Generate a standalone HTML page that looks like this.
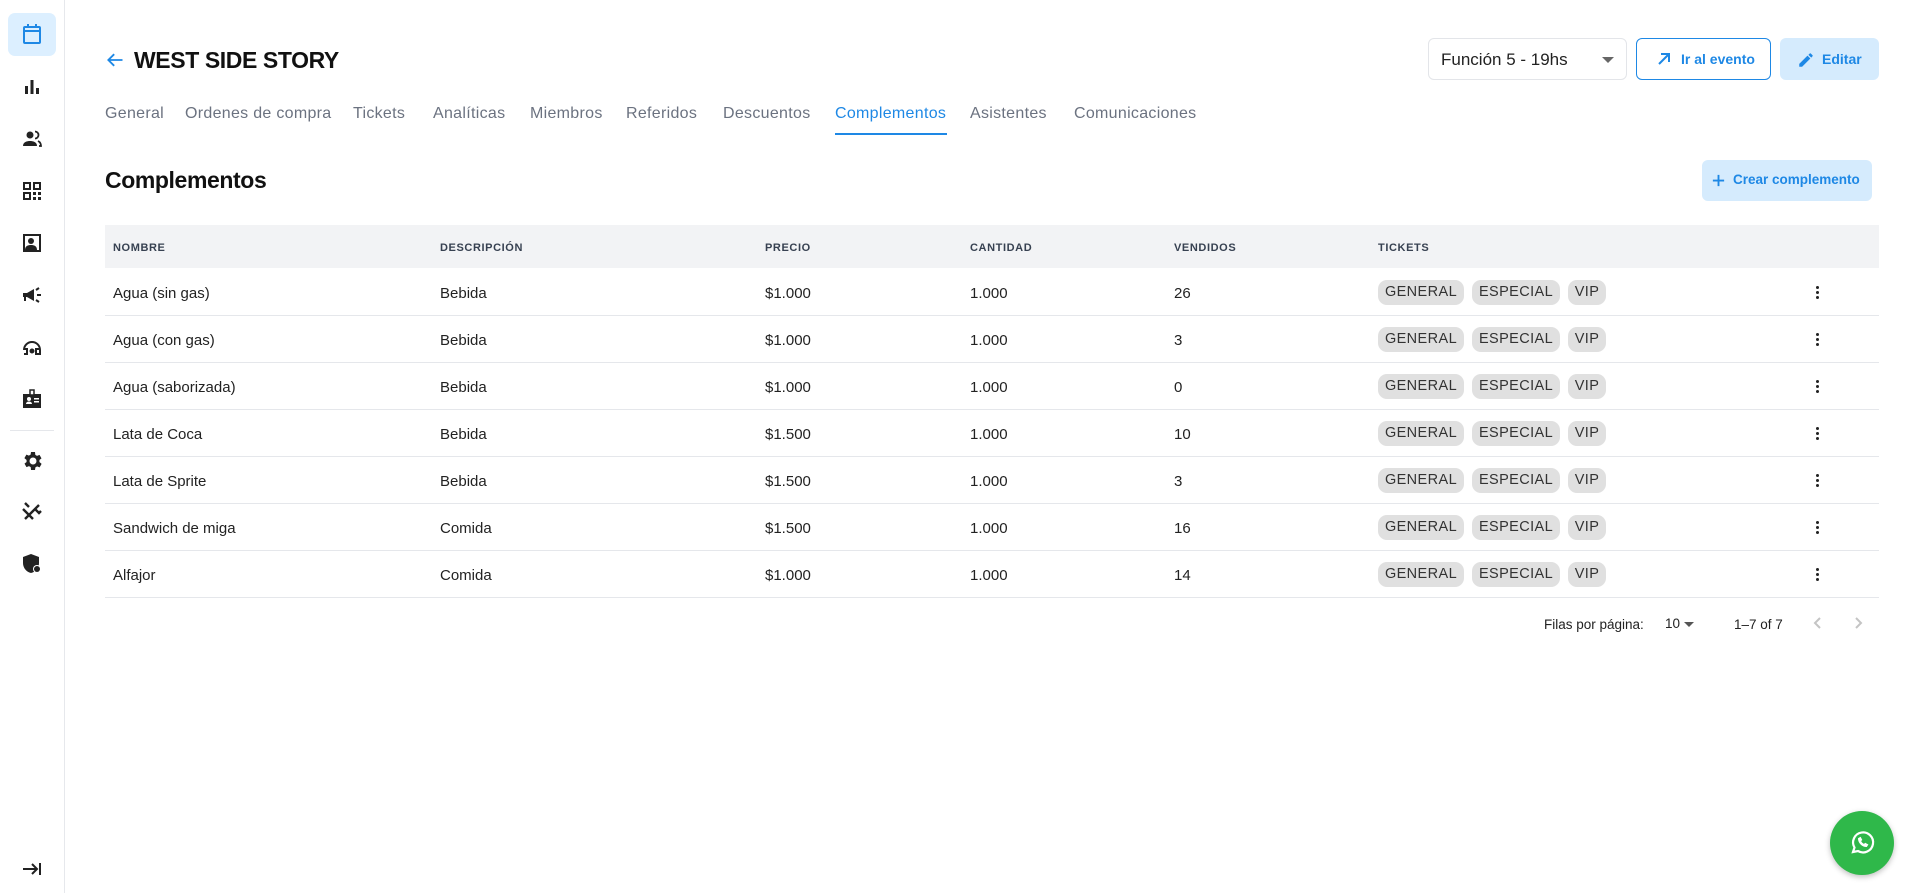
<!DOCTYPE html>
<html><head><meta charset="utf-8"><style>
*{box-sizing:border-box;margin:0;padding:0}
body{width:1911px;height:893px;background:#fff;font-family:"Liberation Sans",sans-serif;color:#222;position:relative;overflow:hidden}
.sb{position:absolute;left:0;top:0;width:65px;height:893px;border-right:1px solid #e6e8ec}
.ic{position:absolute;left:20px;width:24px;height:24px}
.abs{position:absolute}
.tab{position:absolute;top:105px;font-size:16px;color:#6b7280;letter-spacing:.3px}
.th{position:absolute;top:242px;font-size:11px;font-weight:bold;color:#374151;letter-spacing:.6px}
.row{position:absolute;left:105px;width:1774px;height:47px;border-bottom:1px solid #e5e7eb}
.row span{position:absolute;top:16px;font-size:15px;color:#222}
.chip{position:absolute;top:11px;height:25px;line-height:25px;background:#e0e0e0;border-radius:9px;font-size:14.5px;color:#333;text-align:center;letter-spacing:.4px}
.kb{position:absolute;left:1711px;top:17px;width:3px}
.kb i{display:block;width:3px;height:3px;border-radius:2px;background:#222;margin-bottom:2px}
</style></head><body>
<div class="sb">
 <div class="abs" style="left:8px;top:13px;width:48px;height:43px;background:#dcefff;border-radius:7px"></div>
 <svg class="ic" style="top:22px" viewBox="0 0 24 24" fill="none" stroke="#1e88e5" stroke-width="2"><rect x="4" y="5" width="16" height="16" rx="1"/><path d="M4 9h16M8 2v4M16 2v4"/></svg>
 <svg class="ic" style="top:75px" viewBox="0 0 24 24" fill="#222"><rect x="5" y="11" width="3" height="8"/><rect x="10.5" y="5" width="3" height="14"/><rect x="16" y="13" width="3" height="6"/></svg>
 <svg class="ic" style="top:127px" viewBox="0 0 24 24" fill="#222"><circle cx="10" cy="8" r="3.5"/><path d="M3 19c0-4 4-5 7-5s7 1 7 5z"/><path d="M15 4.5a3.5 3.5 0 010 7M18 14c2 1 3 2.5 3 5h-2" stroke="#222" stroke-width="1.8" fill="none"/></svg>
 <svg class="ic" style="top:179px" viewBox="0 0 24 24" fill="#222"><path d="M3 3h8v8H3zM13 3h8v8h-8zM3 13h8v8H3zM5 5v4h4V5zM15 5v4h4V5zM5 15v4h4v-4zM13 13h3v3h-3zM18 13h3v3h-3zM13 18h3v3h-3zM18 18h3v3h-3z" fill-rule="evenodd"/></svg>
 <svg class="ic" style="top:231px" viewBox="0 0 24 24" fill="#222"><path d="M3 3h18v18H3zM5 5v14h14V5z" fill-rule="evenodd"/><circle cx="11" cy="10" r="3"/><path d="M5 19c0-4 3-5 6-5s6 1 6 5z"/></svg>
 <svg class="ic" style="top:283px" viewBox="0 0 24 24" fill="#222"><path d="M3 10h4l7-4v12l-7-4H6v4H4v-4H3z"/><path d="M17 12h4M16 7l3-2M16 17l3 2" stroke="#222" stroke-width="2"/></svg>
 <svg class="ic" style="top:335px" viewBox="0 0 24 24" fill="none" stroke="#222" stroke-width="2"><path d="M4 15a8 8 0 0116 0v4h-4v-5h3M4 14h3v5H4"/><circle cx="12" cy="16" r="1.5" fill="#222"/></svg>
 <svg class="ic" style="top:387px" viewBox="0 0 24 24" fill="#222"><path d="M3 7h18v14H3z"/><path d="M10 3h4v5h-4z" fill="#fff" stroke="#222" stroke-width="1.5"/><circle cx="9" cy="12" r="2" fill="#fff"/><path d="M6 17c0-2 2-2.5 3-2.5s3 .5 3 2.5zM14 11h5v1.5h-5zM14 14h5v1.5h-5z" fill="#fff"/></svg>
 <div class="abs" style="left:10px;top:430px;width:44px;height:1px;background:#e5e7eb"></div>
 <svg class="ic" style="top:449px" viewBox="0 0 24 24" fill="#222"><path d="M19.4 13a7.5 7.5 0 000-2l2.1-1.6-2-3.5-2.5 1a7 7 0 00-1.7-1L15 3h-4l-.4 2.6a7 7 0 00-1.7 1l-2.5-1-2 3.5L6.6 11a7.5 7.5 0 000 2l-2.1 1.6 2 3.5 2.5-1a7 7 0 001.7 1L11 21h4l.4-2.6a7 7 0 001.7-1l2.5 1 2-3.5zM13 15.5a3.5 3.5 0 110-7 3.5 3.5 0 010 7z"/></svg>
 <svg class="ic" style="top:500px" viewBox="0 0 24 24" fill="none" stroke="#222" stroke-width="2.4"><path d="M5 19L15 9M13 19L3 9M5 3l4 4M19 5l-4 4 4 4 2-2"/></svg>
 <svg class="ic" style="top:552px" viewBox="0 0 24 24" fill="#222"><path d="M11 2l8 3v6c0 5-3.5 9-8 10-4.5-1-8-5-8-10V5z"/><circle cx="17" cy="17" r="4" fill="#fff"/><circle cx="17" cy="17" r="3"/></svg>
 <svg class="ic" style="top:857px" viewBox="0 0 24 24" fill="none" stroke="#222" stroke-width="2"><path d="M3 12h13M12 7l5 5-5 5M20 6v12"/></svg>
</div>

<svg class="abs" style="left:105px;top:50px" width="20" height="20" viewBox="0 0 24 24" fill="none" stroke="#1e88e5" stroke-width="2.2"><path d="M21 12H4M11 5l-7 7 7 7"/></svg>
<div class="abs" style="left:134px;top:47px;font-size:23px;font-weight:bold;color:#111;letter-spacing:-.4px">WEST SIDE STORY</div>

<div class="abs" style="left:1428px;top:38px;width:199px;height:42px;border:1px solid #e3e5e9;border-radius:6px"></div>
<div class="abs" style="left:1441px;top:50px;font-size:17px;color:#222">Función 5 - 19hs</div>
<div class="abs" style="left:1602px;top:57px;width:0;height:0;border-left:6px solid transparent;border-right:6px solid transparent;border-top:6px solid #666"></div>
<div class="abs" style="left:1636px;top:38px;width:135px;height:42px;border:1px solid #1e88e5;border-radius:6px"></div>
<svg class="abs" style="left:1656px;top:51px" width="16" height="16" viewBox="0 0 16 16" fill="none" stroke="#1e88e5" stroke-width="2"><path d="M3 13L13 3M5 3h8v8"/></svg>
<div class="abs" style="left:1681px;top:51px;font-size:14px;font-weight:bold;color:#1e88e5">Ir al evento</div>
<div class="abs" style="left:1780px;top:38px;width:99px;height:42px;background:#d5ebfd;border-radius:6px"></div>
<svg class="abs" style="left:1797px;top:51px" width="18" height="18" viewBox="0 0 24 24" fill="#1e88e5"><path d="M3 17.2V21h3.8l11-11-3.8-3.8zM20.7 7a1 1 0 000-1.4l-2.3-2.3a1 1 0 00-1.4 0l-1.8 1.8 3.8 3.8z"/></svg>
<div class="abs" style="left:1822px;top:51px;font-size:14px;font-weight:bold;color:#1e88e5">Editar</div>

<div class="tab" style="left:105px">General</div>
<div class="tab" style="left:185px">Ordenes de compra</div>
<div class="tab" style="left:353px">Tickets</div>
<div class="tab" style="left:433px">Analíticas</div>
<div class="tab" style="left:530px">Miembros</div>
<div class="tab" style="left:626px">Referidos</div>
<div class="tab" style="left:723px">Descuentos</div>
<div class="tab" style="left:835px;color:#1e88e5">Complementos</div>
<div class="abs" style="left:835px;top:133px;width:112px;height:2px;background:#1e88e5"></div>
<div class="tab" style="left:970px">Asistentes</div>
<div class="tab" style="left:1074px">Comunicaciones</div>

<div class="abs" style="left:105px;top:167px;font-size:23px;font-weight:bold;color:#111;letter-spacing:-.4px">Complementos</div>
<div class="abs" style="left:1702px;top:160px;width:170px;height:41px;background:#d5ebfd;border-radius:6px"></div>
<svg class="abs" style="left:1711px;top:173px" width="15" height="15" viewBox="0 0 16 16" stroke="#1e88e5" stroke-width="2"><path d="M8 2v12M2 8h12"/></svg>
<div class="abs" style="left:1733px;top:172px;font-size:13.5px;font-weight:bold;color:#1e88e5">Crear complemento</div>

<div class="abs" style="left:105px;top:225px;width:1774px;height:43px;background:#f2f3f5"></div>
<div class="th" style="left:113px">NOMBRE</div>
<div class="th" style="left:440px">DESCRIPCIÓN</div>
<div class="th" style="left:765px">PRECIO</div>
<div class="th" style="left:970px">CANTIDAD</div>
<div class="th" style="left:1174px">VENDIDOS</div>
<div class="th" style="left:1378px">TICKETS</div>

<div class="row" style="top:269px"><span style="left:8px">Agua (sin gas)</span><span style="left:335px">Bebida</span><span style="left:660px">$1.000</span><span style="left:865px">1.000</span><span style="left:1069px">26</span><div class="chip" style="left:1273px;width:86px">GENERAL</div><div class="chip" style="left:1367px;width:88px">ESPECIAL</div><div class="chip" style="left:1463px;width:38px">VIP</div><div class="kb"><i></i><i></i><i></i></div></div>
<div class="row" style="top:316px"><span style="left:8px">Agua (con gas)</span><span style="left:335px">Bebida</span><span style="left:660px">$1.000</span><span style="left:865px">1.000</span><span style="left:1069px">3</span><div class="chip" style="left:1273px;width:86px">GENERAL</div><div class="chip" style="left:1367px;width:88px">ESPECIAL</div><div class="chip" style="left:1463px;width:38px">VIP</div><div class="kb"><i></i><i></i><i></i></div></div>
<div class="row" style="top:363px"><span style="left:8px">Agua (saborizada)</span><span style="left:335px">Bebida</span><span style="left:660px">$1.000</span><span style="left:865px">1.000</span><span style="left:1069px">0</span><div class="chip" style="left:1273px;width:86px">GENERAL</div><div class="chip" style="left:1367px;width:88px">ESPECIAL</div><div class="chip" style="left:1463px;width:38px">VIP</div><div class="kb"><i></i><i></i><i></i></div></div>
<div class="row" style="top:410px"><span style="left:8px">Lata de Coca</span><span style="left:335px">Bebida</span><span style="left:660px">$1.500</span><span style="left:865px">1.000</span><span style="left:1069px">10</span><div class="chip" style="left:1273px;width:86px">GENERAL</div><div class="chip" style="left:1367px;width:88px">ESPECIAL</div><div class="chip" style="left:1463px;width:38px">VIP</div><div class="kb"><i></i><i></i><i></i></div></div>
<div class="row" style="top:457px"><span style="left:8px">Lata de Sprite</span><span style="left:335px">Bebida</span><span style="left:660px">$1.500</span><span style="left:865px">1.000</span><span style="left:1069px">3</span><div class="chip" style="left:1273px;width:86px">GENERAL</div><div class="chip" style="left:1367px;width:88px">ESPECIAL</div><div class="chip" style="left:1463px;width:38px">VIP</div><div class="kb"><i></i><i></i><i></i></div></div>
<div class="row" style="top:504px"><span style="left:8px">Sandwich de miga</span><span style="left:335px">Comida</span><span style="left:660px">$1.500</span><span style="left:865px">1.000</span><span style="left:1069px">16</span><div class="chip" style="left:1273px;width:86px">GENERAL</div><div class="chip" style="left:1367px;width:88px">ESPECIAL</div><div class="chip" style="left:1463px;width:38px">VIP</div><div class="kb"><i></i><i></i><i></i></div></div>
<div class="row" style="top:551px"><span style="left:8px">Alfajor</span><span style="left:335px">Comida</span><span style="left:660px">$1.000</span><span style="left:865px">1.000</span><span style="left:1069px">14</span><div class="chip" style="left:1273px;width:86px">GENERAL</div><div class="chip" style="left:1367px;width:88px">ESPECIAL</div><div class="chip" style="left:1463px;width:38px">VIP</div><div class="kb"><i></i><i></i><i></i></div></div>

<div class="abs" style="left:1544px;top:617px;font-size:13.5px;color:#222">Filas por página:</div>
<div class="abs" style="left:1665px;top:616px;font-size:13.5px;color:#222">10</div>
<div class="abs" style="left:1684px;top:622px;border-left:5px solid transparent;border-right:5px solid transparent;border-top:5px solid #555"></div>
<div class="abs" style="left:1734px;top:617px;font-size:13.5px;color:#222">1–7 of 7</div>
<svg class="abs" style="left:1810px;top:614px" width="16" height="18" viewBox="0 0 16 18" fill="none" stroke="#c4c4c4" stroke-width="2"><path d="M10 4L5 9l5 5"/></svg>
<svg class="abs" style="left:1850px;top:614px" width="16" height="18" viewBox="0 0 16 18" fill="none" stroke="#c4c4c4" stroke-width="2"><path d="M6 4l5 5-5 5"/></svg>

<div class="abs" style="left:1830px;top:811px;width:64px;height:64px;border-radius:50%;background:#2fb84a;box-shadow:0 2px 6px rgba(0,0,0,.25)"></div>
<svg class="abs" style="left:1848px;top:829px" width="28" height="28" viewBox="0 0 28 28" fill="none" stroke="#fff" stroke-width="2.2"><path d="M5 23l1.5-4.5A10 10 0 1110 22z"/><path d="M10.5 9.5c0 4 3.5 8 8 8l1.2-1.8-2.5-1.3-1 1.1c-1.5-.6-3-2-3.6-3.6l1.1-1-1.3-2.5z" fill="#fff" stroke-width="1"/></svg>
</body></html>
